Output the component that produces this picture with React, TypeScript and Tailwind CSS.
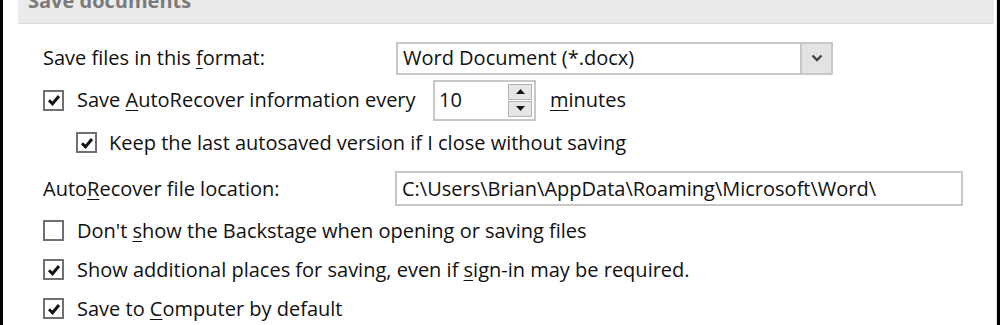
import React from 'react';

const font = { fontFamily: '"Open Sans", "Noto Sans", Arial, sans-serif' };

const CheckBox: React.FC<{ checked?: boolean }> = ({ checked }) => (
  <div className="w-[21px] h-[21px] border-2 border-[#707070] bg-white flex items-center justify-center shrink-0">
    {checked && (
      <svg width="14" height="14" viewBox="0 0 14 14">
        <path d="M2 7.2 L5.5 10.8 L12 3" fill="none" stroke="#111" strokeWidth="2.9" />
      </svg>
    )}
  </div>
);

const U: React.FC<{ children: React.ReactNode }> = ({ children }) => (
  <span className="underline underline-offset-[3px] decoration-1">{children}</span>
);

const App: React.FC = () => {
  return (
    <div className="w-[1000px] h-[325px] bg-white flex overflow-hidden text-[#111] text-[20px] leading-[24px]" style={font}>
      <div className="w-[3px] bg-black shrink-0" />
      <div className="flex-1 flex flex-col pl-[15px] pr-[2px] border-r border-[#e6e6e6]">
        <div className="h-[24px] bg-[#ebebeb] border-b border-[#dcdcdc] overflow-hidden pl-[10px]">
          <div className="text-[20px] font-bold text-[#7a7a7a] leading-[20px] -mt-[9px]">Save documents</div>
        </div>

        <div className="pl-[25px] flex flex-col">
          <div className="flex items-center h-[32px] mt-[18px]">
            <span className="w-[353px]">Save files in this <U>f</U>ormat:</span>
            <div className="w-[437px] h-[33px] border-2 border-[#c8c8c8] flex items-stretch">
              <span className="flex-1 pl-[5px] flex items-center">Word Document (*.docx)</span>
              <div className="w-[31px] bg-[#e3e3e3] border-l-2 border-[#c8c8c8] flex items-center justify-center">
                <svg width="12" height="8" viewBox="0 0 12 8">
                  <path d="M1.5 1.5 L6 6 L10.5 1.5" fill="none" stroke="#444" strokeWidth="2.4" />
                </svg>
              </div>
            </div>
          </div>

          <div className="flex items-center h-[42px] mt-[5px]">
            <CheckBox checked />
            <span className="ml-[13px] w-[356px]">Save <U>A</U>utoRecover information every</span>
            <div className="w-[103px] h-[41px] border-2 border-[#c8c8c8] flex items-stretch">
              <span className="flex-1 pl-[4px] flex items-center">10</span>
              <div className="w-[24px] my-[2px] mr-[2px] flex flex-col gap-[1px]">
                <div className="flex-1 bg-[#e6e6e6] border border-[#b4b4b4] flex items-center justify-center">
                  <svg width="9" height="5" viewBox="0 0 9 5"><path d="M0 5 L4.5 0 L9 5 Z" fill="#111" /></svg>
                </div>
                <div className="flex-1 bg-[#e6e6e6] border border-[#b4b4b4] flex items-center justify-center">
                  <svg width="9" height="5" viewBox="0 0 9 5"><path d="M0 0 L4.5 5 L9 0 Z" fill="#111" /></svg>
                </div>
              </div>
            </div>
            <span className="ml-[14px]"><U>m</U>inutes</span>
          </div>

          <div className="flex items-center h-[21px] mt-[11px] pl-[33px]">
            <CheckBox checked />
            <span className="ml-[12px]">Keep the last autosaved version if I close without saving</span>
          </div>

          <div className="flex items-center h-[35px] mt-[18px]">
            <span className="w-[352px]">Auto<U>R</U>ecover file location:</span>
            <div className="w-[568px] h-[35px] border-2 border-[#c8c8c8] flex items-center pl-[5px]">
              C:\Users\Brian\AppData\Roaming\Microsoft\Word\
            </div>
          </div>

          <div className="flex items-center h-[21px] mt-[14px]">
            <CheckBox />
            <span className="ml-[13px]">Don't <U>s</U>how the Backstage when opening or saving files</span>
          </div>

          <div className="flex items-center h-[21px] mt-[18px]">
            <CheckBox checked />
            <span className="ml-[13px]">Show additional places for saving, even if <U>s</U>ign-in may be required.</span>
          </div>

          <div className="flex items-center h-[21px] mt-[18px]">
            <CheckBox checked />
            <span className="ml-[13px]">Save to <U>C</U>omputer by default</span>
          </div>
        </div>
      </div>
      <div className="w-[3px] bg-black shrink-0" />
    </div>
  );
};

export default App;
